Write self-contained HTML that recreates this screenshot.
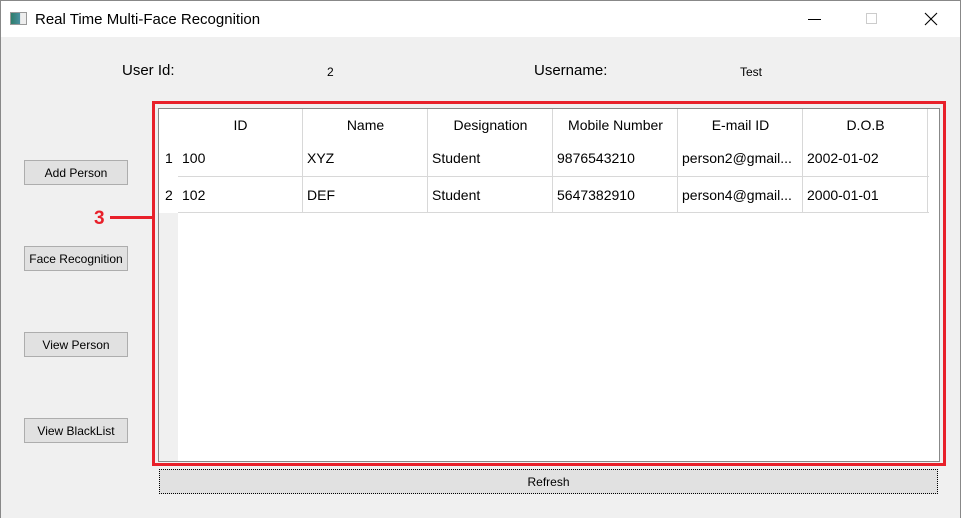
<!DOCTYPE html>
<html><head><style>
*{margin:0;padding:0;box-sizing:border-box}
body{width:961px;height:518px;background:#f0f0f0;font-family:"Liberation Sans",sans-serif;position:relative;overflow:hidden}
.a{position:absolute}
.title{left:0;top:0;width:961px;height:37px;background:#fff}
.btn{position:absolute;left:24px;width:104px;height:25px;background:#e1e1e1;border:1px solid #adadad;font-size:12px;text-align:center;line-height:25px;color:#000}
.t{font-size:14px;color:#000}
.cell{position:absolute;font-size:14px;line-height:34px;padding-left:4px;white-space:nowrap}
</style></head><body>
<div class="a title"></div>
<div class="a" style="left:0;top:0;width:1px;height:518px;background:#888"></div>
<div class="a" style="left:960px;top:0;width:1px;height:518px;background:#888"></div>
<div class="a" style="left:0;top:0;width:961px;height:1px;background:#888"></div>
<div class="a" style="left:10px;top:12px;width:17px;height:13px;border:1px solid #999;background:linear-gradient(90deg,#2e7d6a,#4a90a0 60%,#eee 62%)"></div>
<div class="a" style="left:35px;top:11px;font-size:15px">Real Time Multi-Face Recognition</div>
<div class="a" style="left:808px;top:19px;width:13px;height:1px;background:#000"></div>
<div class="a" style="left:866px;top:13px;width:11px;height:11px;border:1px solid #ccc"></div>
<div class="a" style="left:924px;top:12px;width:14px;height:14px"><svg width="14" height="14"><path d="M1 1L13 13M13 1L1 13" stroke="#000" stroke-width="1.1"/></svg></div>

<div class="a t" style="left:122px;top:62px;font-size:15px">User Id:</div>
<div class="a" style="left:327px;top:65px;font-size:12px">2</div>
<div class="a t" style="left:534px;top:62px;font-size:15px">Username:</div>
<div class="a" style="left:740px;top:65px;font-size:12px">Test</div>

<div class="btn" style="top:160px">Add Person</div>
<div class="btn" style="top:246px">Face Recognition</div>
<div class="btn" style="top:332px">View Person</div>
<div class="btn" style="top:418px">View BlackList</div>

<div class="a" style="left:94px;top:208px;color:#e8202a;font-weight:bold;font-size:19px">3</div>
<div class="a" style="left:110px;top:216px;width:43px;height:3px;background:#e8202a"></div>
<div class="a" style="left:152px;top:101px;width:794px;height:365px;border:3px solid #e8202a"></div>
<div class="a" style="left:158px;top:108px;width:782px;height:354px;border:1px solid #888;background:#fff">
 <div class="a" style="left:0;top:0;width:19px;height:352px;background:#f0f0f0"></div>
 <div class="a" style="left:0;top:0;width:19px;height:104px;background:#fff"></div>
</div>
<div class="a" style="left:159px;top:109px;width:780px;height:352px">
 <div class="a" style="left:19px;top:67px;width:751px;height:1px;background:#d8d8d8"></div>
 <div class="a" style="left:19px;top:103px;width:751px;height:1px;background:#d8d8d8"></div>
 <div class="a" style="left:143px;top:0;width:1px;height:104px;background:#d8d8d8"></div>
 <div class="a" style="left:268px;top:0;width:1px;height:104px;background:#d8d8d8"></div>
 <div class="a" style="left:393px;top:0;width:1px;height:104px;background:#d8d8d8"></div>
 <div class="a" style="left:518px;top:0;width:1px;height:104px;background:#d8d8d8"></div>
 <div class="a" style="left:643px;top:0;width:1px;height:104px;background:#d8d8d8"></div>
 <div class="a" style="left:768px;top:0;width:1px;height:104px;background:#d8d8d8"></div>
 <div class="cell" style="left:19px;top:-1px;width:125px;text-align:center;padding:0">ID</div>
 <div class="cell" style="left:144px;top:-1px;width:125px;text-align:center;padding:0">Name</div>
 <div class="cell" style="left:269px;top:-1px;width:125px;text-align:center;padding:0">Designation</div>
 <div class="cell" style="left:394px;top:-1px;width:125px;text-align:center;padding:0">Mobile Number</div>
 <div class="cell" style="left:519px;top:-1px;width:125px;text-align:center;padding:0">E-mail ID</div>
 <div class="cell" style="left:644px;top:-1px;width:125px;text-align:center;padding:0">D.O.B</div>
 <div class="cell" style="left:2px;top:32px">1</div>
 <div class="cell" style="left:19px;top:32px">100</div>
 <div class="cell" style="left:144px;top:32px">XYZ</div>
 <div class="cell" style="left:269px;top:32px">Student</div>
 <div class="cell" style="left:394px;top:32px">9876543210</div>
 <div class="cell" style="left:519px;top:32px">person2@gmail...</div>
 <div class="cell" style="left:644px;top:32px">2002-01-02</div>
 <div class="cell" style="left:2px;top:69px">2</div>
 <div class="cell" style="left:19px;top:69px">102</div>
 <div class="cell" style="left:144px;top:69px">DEF</div>
 <div class="cell" style="left:269px;top:69px">Student</div>
 <div class="cell" style="left:394px;top:69px">5647382910</div>
 <div class="cell" style="left:519px;top:69px">person4@gmail...</div>
 <div class="cell" style="left:644px;top:69px">2000-01-01</div>
</div>
<div class="a" style="left:159px;top:469px;width:779px;height:25px;background:#e1e1e1;border:1px dotted #000;font-size:12px;text-align:center;line-height:25px">Refresh</div>
</body></html>
